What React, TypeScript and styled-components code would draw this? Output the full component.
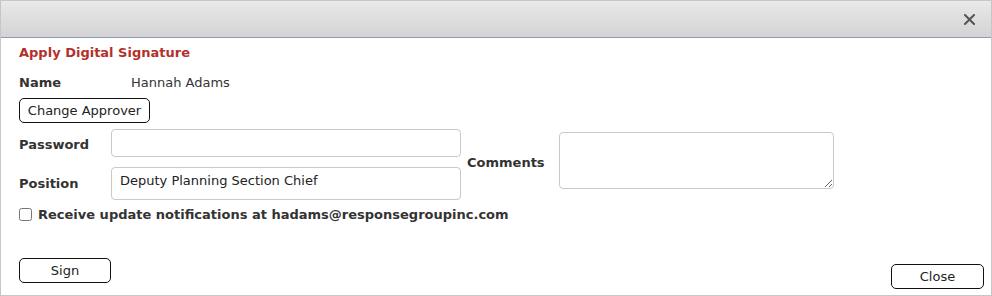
import styled, { createGlobalStyle } from "styled-components";

const GlobalStyle = createGlobalStyle`
  html, body {
    margin: 0;
    padding: 0;
    background: #ffffff;
  }
  body {
    font-family: "DejaVu Sans", Verdana, sans-serif;
    font-size: 13px;
    color: #333333;
  }
`;

const SignatureDialog = () => {
  return (
    <Dialog>
      <TitleBar>
        <CloseIcon aria-label="close">
          <svg width="11" height="11" viewBox="0 0 11 11">
            <path d="M1 1 L10 10 M10 1 L1 10" stroke="#555" strokeWidth="2" strokeLinecap="square" />
          </svg>
        </CloseIcon>
      </TitleBar>
      <Body>
        <Heading>Apply Digital Signature</Heading>
        <NameRow>
          <Label>Name</Label>
          <Value>Hannah Adams</Value>
        </NameRow>
        <Button $width={131}>Change Approver</Button>
        <FormSection>
          <FieldGrid>
            <Label $shift={2}>Password</Label>
            <TextInput type="password" $height={28} />
            <Label>Position</Label>
            <TextInput type="text" $height={33} defaultValue="Deputy Planning Section Chief" />
          </FieldGrid>
          <CommentsLabel $shift={-2}>Comments</CommentsLabel>
          <Comments />
        </FormSection>
        <CheckRow>
          <input type="checkbox" />
          <span>Receive update notifications at hadams@responsegroupinc.com</span>
        </CheckRow>
      </Body>
      <Footer>
        <SignButton $width={92}>Sign</SignButton>
        <Button $width={93}>Close</Button>
      </Footer>
    </Dialog>
  );
};

export default function App() {
  return (
    <>
      <GlobalStyle />
      <SignatureDialog />
    </>
  );
}

// styles
const Dialog = styled.div`
  width: 992px;
  height: 296px;
  box-sizing: border-box;
  border: 1px solid #c6c6c6;
  display: flex;
  flex-direction: column;
  background: #fff;
`;
const TitleBar = styled.div`
  height: 36px;
  flex: none;
  background: linear-gradient(#e9e9e9, #d3d3d3);
  border-bottom: 1px solid #8e9ab6;
  display: flex;
  align-items: center;
  justify-content: flex-end;
  padding-right: 16px;
`;
const CloseIcon = styled.span`
  display: flex;
  width: 11px;
  height: 11px;
  margin-top: 1px;
`;
const Body = styled.div`
  display: flex;
  flex-direction: column;
  align-items: flex-start;
  padding: 0 18px;
`;
const Heading = styled.div`
  margin-top: 7px;
  font-weight: 700;
  line-height: 16px;
  color: #b3312b;
`;
const NameRow = styled.div`
  margin-top: 14px;
  display: flex;
  line-height: 16px;
`;
const Label = styled.span<{ $shift?: number }>`
  font-weight: 700;
  width: 112px;
  line-height: 16px;
  color: #333;
  position: relative;
  top: ${(p) => p.$shift ?? 0}px;
`;
const Value = styled.span`
  color: #333;
`;
const Button = styled.button<{ $width: number }>`
  width: ${(p) => p.$width}px;
  height: 25px;
  margin-top: 7px;
  padding: 0 6px;
  background: #fff;
  border: 1px solid #111;
  border-radius: 5px;
  font-family: "DejaVu Sans", Verdana, sans-serif;
  font-size: 13px;
  color: #222;
  white-space: nowrap;
`;
const SignButton = styled(Button)`
  margin-bottom: 6px;
`;
const FormSection = styled.div`
  margin-top: 6px;
  display: flex;
  align-items: center;
`;
const FieldGrid = styled.div`
  display: grid;
  grid-template-columns: 92px 350px;
  row-gap: 10px;
  align-items: center;
`;
const TextInput = styled.input<{ $height: number }>`
  box-sizing: border-box;
  width: 350px;
  height: ${(p) => p.$height}px;
  border: 1px solid #c9c9c9;
  border-radius: 4px;
  padding: 0 8px 6px;
  font-family: "DejaVu Sans", Verdana, sans-serif;
  font-size: 13px;
  color: #222;
  outline: none;
`;
const CommentsLabel = styled(Label)`
  width: 92px;
  margin-left: 6px;
`;
const Comments = styled.textarea`
  box-sizing: border-box;
  width: 275px;
  height: 57px;
  margin: 0 0 8px;
  border: 1px solid #c9c9c9;
  border-radius: 4px;
  font-family: "DejaVu Sans", Verdana, sans-serif;
  font-size: 13px;
`;
const CheckRow = styled.label`
  margin-top: 8px;
  display: flex;
  align-items: center;
  gap: 6px;
  font-weight: 700;
  line-height: 13px;
  color: #333;
  input {
    margin: 0;
    width: 13px;
    height: 13px;
  }
`;
const Footer = styled.div`
  margin-top: auto;
  display: flex;
  justify-content: space-between;
  align-items: flex-end;
  padding: 0 7px 6px 18px;
`;
